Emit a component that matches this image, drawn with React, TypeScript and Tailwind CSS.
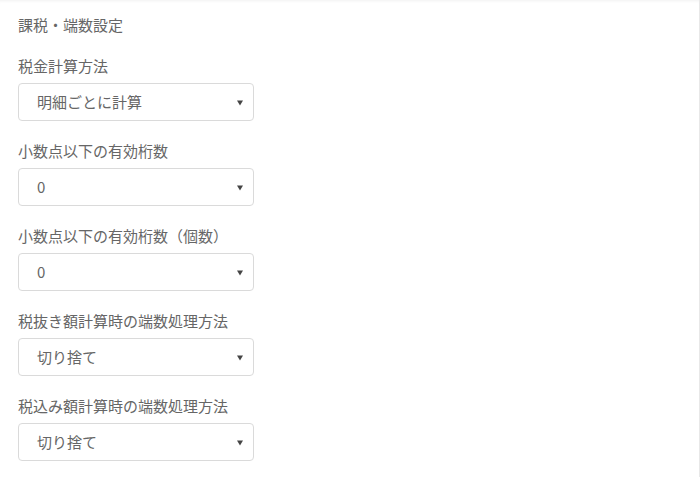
import React from "react";

const fields = [
  { label: "税金計算方法", value: "明細ごとに計算" },
  { label: "小数点以下の有効桁数", value: "0" },
  { label: "小数点以下の有効桁数（個数）", value: "0" },
  { label: "税抜き額計算時の端数処理方法", value: "切り捨て" },
  { label: "税込み額計算時の端数処理方法", value: "切り捨て" },
];

function SelectBox({ value }: { value: string }) {
  return (
    <div className="flex items-center justify-between w-[236px] h-[38px] pl-[18px] pr-[10px] border border-[#dadada] rounded-[4px] bg-white text-[15px] text-[#666]">
      <span>{value}</span>
      <svg width="6" height="6" viewBox="0 0 6 6" className="mt-[1px]">
        <path d="M0 0.5 L6 0.5 L3 5.5 Z" fill="#444" />
      </svg>
    </div>
  );
}

export default function App() {
  return (
    <div
      className="w-full h-[477px] bg-white border-r border-[#e8e8e8] shadow-[inset_0_3px_3px_-2px_rgba(0,0,0,0.06)] px-[18px] pt-[15px]"
      style={{ fontFamily: '"Noto Sans CJK JP", "Noto Sans", sans-serif' }}
    >
      <div className="text-[15px] leading-5 text-[#666]">課税・端数設定</div>
      <div className="flex flex-col gap-[20px] mt-[21px]">
        {fields.map((f) => (
          <div key={f.label} className="flex flex-col gap-[7px]">
            <span className="text-[15px] leading-5 text-[#666]">{f.label}</span>
            <SelectBox value={f.value} />
          </div>
        ))}
      </div>
    </div>
  );
}
